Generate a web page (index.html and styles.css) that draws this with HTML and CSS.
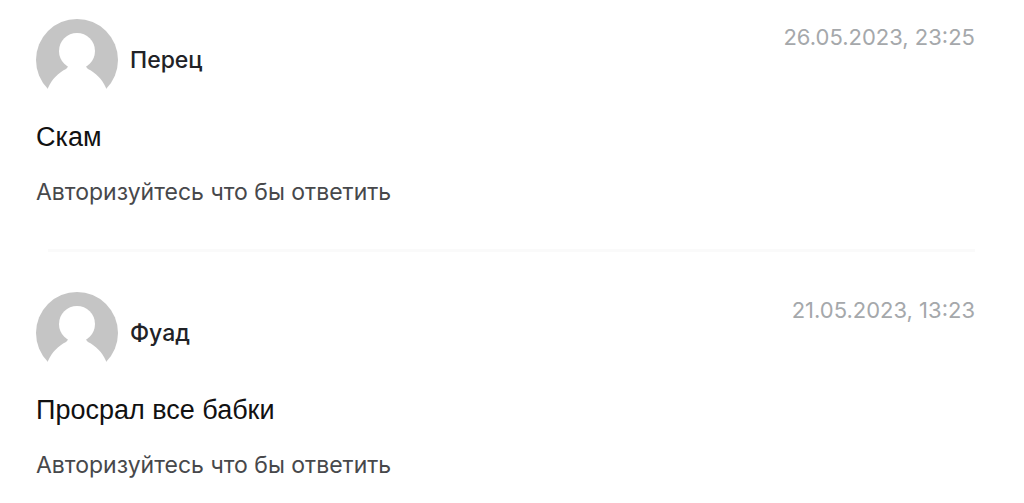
FILE: index.html
```
<!DOCTYPE html>
<html lang="ru">
<head>
    <meta charset="UTF-8">
    <meta name="viewport" content="width=device-width, initial-scale=1.0">
    <title>Комментарии</title>
    <link rel="stylesheet" href="styles.css">
</head>
<body>
    <main class="comments">
        <article class="comment">
            <header class="comment-header">
                <svg class="avatar" viewBox="0 0 82 82" aria-hidden="true">
                    <circle class="avatar-bg" cx="41" cy="41" r="41"/>
                    <circle class="avatar-person" cx="41" cy="32" r="18"/>
                    <path class="avatar-person" d="M32 44v3c0 1-1 2-2 3-8 4-14 10-18 19v13h58V69c-4-9-10-15-18-19-1-1-2-2-2-3v-3Z"/>
                </svg>
                <h2 class="comment-author">Перец</h2>
                <time class="comment-date" datetime="2023-05-26T23:25">26.05.2023, 23:25</time>
            </header>
            <p class="comment-text">Скам</p>
            <p class="comment-reply">Авторизуйтесь что бы ответить</p>
        </article>
        <hr class="divider">
        <article class="comment">
            <header class="comment-header">
                <svg class="avatar" viewBox="0 0 82 82" aria-hidden="true">
                    <circle class="avatar-bg" cx="41" cy="41" r="41"/>
                    <circle class="avatar-person" cx="41" cy="32" r="18"/>
                    <path class="avatar-person" d="M32 44v3c0 1-1 2-2 3-8 4-14 10-18 19v13h58V69c-4-9-10-15-18-19-1-1-2-2-2-3v-3Z"/>
                </svg>
                <h2 class="comment-author">Фуад</h2>
                <time class="comment-date" datetime="2023-05-21T13:23">21.05.2023, 13:23</time>
            </header>
            <p class="comment-text">Просрал все бабки</p>
            <p class="comment-reply">Авторизуйтесь что бы ответить</p>
        </article>
    </main>
</body>
</html>
```
FILE: styles.css
```
body {
    margin: 0;
    background-color: #fff;
    font-family: Inter, sans-serif;
}

.comments {
    padding: 19px 49px 0 36px;
}

.divider {
    height: 3px;
    margin: 39px 0 40px 12px;
    border: none;
    background-color: #fafafa;
}

.comment-header {
    display: flex;
    align-items: center;
    gap: 12px;
}

.avatar {
    width: 82px;
    height: 82px;
}

.avatar-bg {
    fill: #c5c5c5;
}

.avatar-person {
    fill: #fff;
}

.comment-author {
    margin: 0;
    font-size: 23px;
    line-height: 32px;
    font-weight: 500;
    color: #212226;
}

.comment-date {
    align-self: flex-start;
    margin-left: auto;
    font-size: 22px;
    line-height: 36px;
    color: #a5a8ab;
}

.comment-text {
    margin: 18px 0 0;
    font-family: "Liberation Sans", Arial, sans-serif;
    font-size: 27px;
    line-height: 36px;
    color: #111;
}

.comment-reply {
    margin: 19px 0 0;
    font-size: 23px;
    line-height: 36px;
    color: #47484b;
}
```
